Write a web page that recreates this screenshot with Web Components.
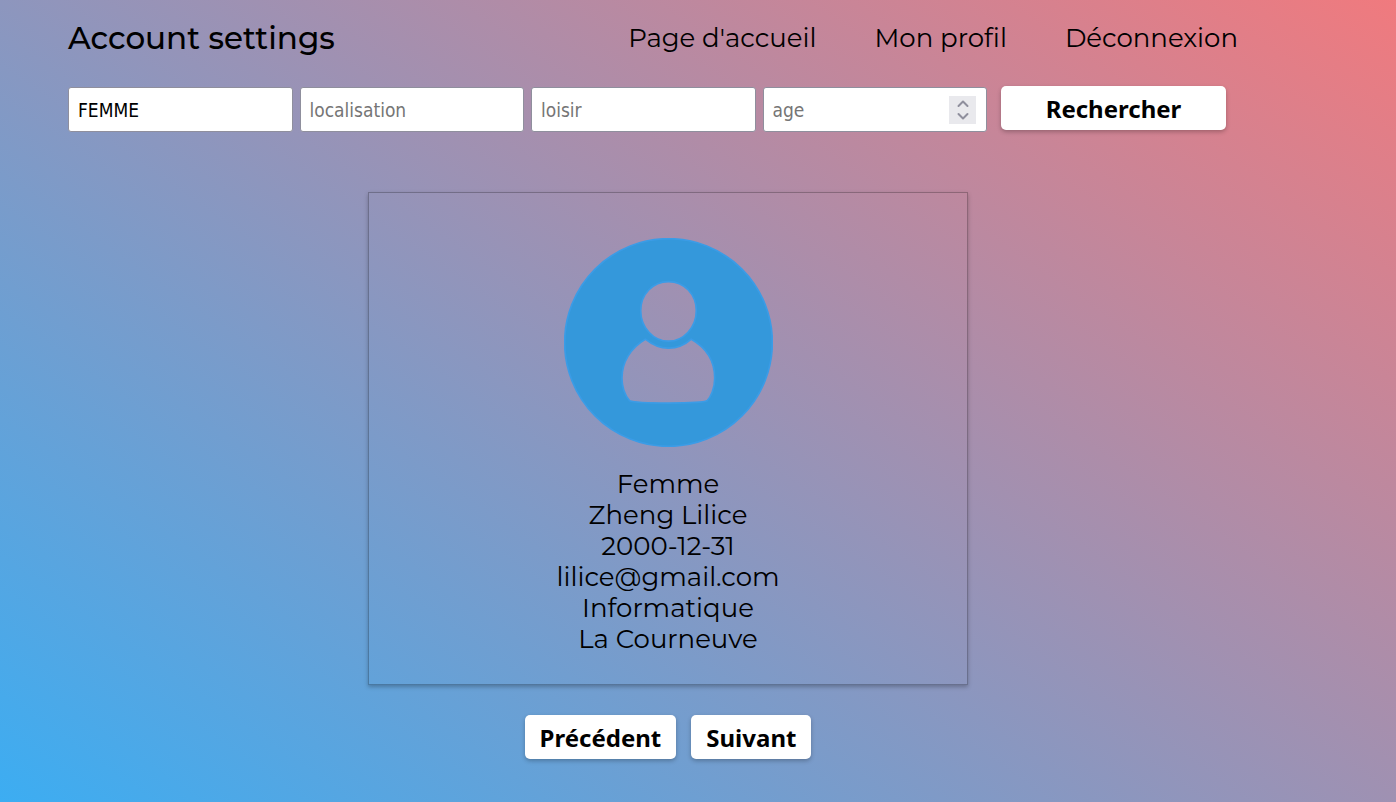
<!DOCTYPE html>
<html lang="fr">
<head>
<meta charset="utf-8">
<meta name="viewport" content="width=device-width, initial-scale=1">
<title>Account settings</title>
<style>
html { min-height: 100%; background: linear-gradient(35deg, #3cadf2, #f07a7e) no-repeat; }
body { margin: 0; color: #000; font: 26px/31px Montserrat, Inter, sans-serif; --ui: Tahoma, "Noto Sans", sans-serif; --field: Tahoma, "DejaVu Sans Condensed", Roboto, sans-serif; }
</style>
</head>
<body>
<account-page>
  <site-header slot="header" heading="Account settings">
    <nav-link href="#accueil">Page d'accueil</nav-link>
    <nav-link href="#profil">Mon profil</nav-link>
    <nav-link href="#deconnexion">Déconnexion</nav-link>
  </site-header>
  <search-bar slot="search"></search-bar>
  <profile-card>
    <li>Femme</li>
    <li>Zheng Lilice</li>
    <li>2000-12-31</li>
    <li>lilice@gmail.com</li>
    <li>Informatique</li>
    <li>La Courneuve</li>
  </profile-card>
  <action-button slot="pager">Précédent</action-button>
  <action-button slot="pager">Suivant</action-button>
</account-page>
<script>
function define(name, markup, setup) {
  const template = document.createElement('template');
  template.innerHTML = markup;
  customElements.define(name, class extends HTMLElement {
    constructor() {
      super();
      this.attachShadow({ mode: 'open' }).append(template.content.cloneNode(true));
    }
    connectedCallback() { if (setup) setup(this, this.shadowRoot); }
  });
}

define('account-page', `
<style>
:host { display: block; padding: 20px 128px 40px 68px; }
main { display: flex; flex-direction: column; align-items: center; gap: 30px; padding-top: 60px; }
.pager { display: flex; gap: 15px; }
</style>
<slot name="header"></slot>
<slot name="search"></slot>
<main><slot></slot><div class="pager"><slot name="pager"></slot></div></main>`);

define('site-header', `
<style>
:host { display: block; }
header { display: flex; align-items: center; justify-content: space-between; padding-right: 30px; }
h1 { margin: 0; font-size: 31px; line-height: 36px; font-weight: 500; }
nav { display: flex; gap: 58px; }
</style>
<header><h1></h1><nav><slot></slot></nav></header>`,
(host, root) => { root.querySelector('h1').textContent = host.getAttribute('heading'); });

define('nav-link', `
<style>
:host { display: block; }
a { color: inherit; text-decoration: none; }
</style>
<a><slot></slot></a>`,
(host, root) => { root.querySelector('a').href = host.getAttribute('href'); });

define('text-field', `
<style>
:host { display: block; flex: 1 1 0; min-width: 0; }
.box { display: flex; align-items: center; box-sizing: border-box; height: 45px; padding: 0 10px 0 9px; background: #fff; border: 1px solid #8f8f9d; border-radius: 3px; }
input { flex: 1; min-width: 0; width: 0; padding: 0; border: 0; outline: 0; background: none; color: #000; font: 19px/28px var(--field); appearance: textfield; }
input::placeholder { color: #757575; opacity: 1; }
input::-webkit-inner-spin-button { appearance: none; margin: 0; }
.steps { display: none; flex-direction: column; width: 27px; background: #e9e9ed; }
:host([type=number]) .steps { display: flex; }
button { display: grid; place-items: center; height: 14px; padding: 0; border: 0; background: none; }
svg { display: block; fill: none; stroke: #8f8f9d; stroke-width: 2; stroke-linecap: round; stroke-linejoin: round; }
</style>
<div class="box">
  <input>
  <div class="steps">
    <button type="button" aria-label="Augmenter"><svg width="14" height="10"><path d="M2.500 8 7 3.500 11.500 8"/></svg></button>
    <button type="button" aria-label="Diminuer"><svg width="14" height="10"><path d="M2.500 2 7 6.500 11.500 2"/></svg></button>
  </div>
</div>`,
(host, root) => {
  const input = root.querySelector('input');
  const label = host.getAttribute('label');
  input.type = host.getAttribute('type') || 'text';
  input.placeholder = label;
  input.setAttribute('aria-label', label);
  input.value = host.getAttribute('value') || '';
  const [up, down] = root.querySelectorAll('button');
  up.onclick = () => input.stepUp();
  down.onclick = () => input.stepDown();
});

define('action-button', `
<style>
:host { display: block; }
button { display: block; width: 100%; height: 44px; padding: 0 15px; border: 0; border-radius: 5px; background: #fff; color: #000; font: bold 24px/31px var(--ui); box-shadow: 0 2px 4px rgba(0, 0, 0, .25); cursor: pointer; }
</style>
<button type="button"><slot></slot></button>`);

define('search-bar', `
<style>
:host { display: block; margin-top: 30px; }
form { display: flex; gap: 7px; align-items: flex-start; max-width: 1158px; }
text-field { margin-top: 1px; }
action-button { flex: 0 1 225px; margin-left: 7px; }
</style>
<form>
  <text-field label="sexe" value="FEMME"></text-field>
  <text-field label="localisation"></text-field>
  <text-field label="loisir"></text-field>
  <text-field label="age" type="number"></text-field>
  <action-button>Rechercher</action-button>
</form>`);

define('profile-card', `
<style>
:host { display: flex; flex-direction: column; align-items: center; gap: 22px; box-sizing: border-box; width: 100%; max-width: 600px; padding: 45px 20px 29px; border: 1px solid rgba(0, 0, 0, .25); box-shadow: 0 2px 4px rgba(0, 0, 0, .25); }
svg { display: block; width: 209px; height: 209px; }
ul { margin: 0; padding: 0; list-style: none; text-align: center; }
</style>
<svg viewBox="44 40 624 624" role="img" aria-label="Photo de profil">
  <path fill="#3498db" stroke="#3b9ce6" stroke-width="5" fill-rule="evenodd" d="M356 42a310 310 0 1 0 0 620a310 310 0 1 0 0-620ZM356 170C309 170 273 208 273 257C273 307 311 348 356 348C401 348 439 307 439 257C439 208 403 170 356 170ZM287 342Q320 369 356 369Q394 369 424 342C470 368 494 410 494 458C494 490 482 515 471 526C455 535 260 535 240 526C228 512 217 488 217 458C217 412 242 368 287 342Z"/>
</svg>
<ul><slot></slot></ul>`);
</script>
</body>
</html>
